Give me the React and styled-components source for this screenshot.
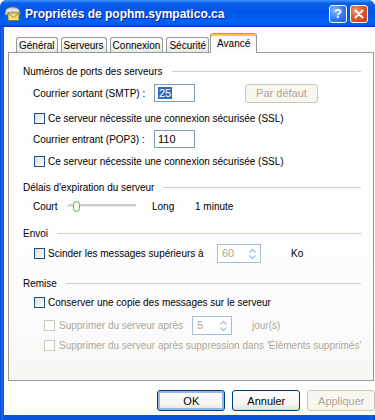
import React from 'react';
import styled, { createGlobalStyle } from 'styled-components';

const Global = createGlobalStyle`
  html, body { margin: 0; padding: 0; background: #ffffff; }
  body { font-family: "Liberation Sans", Arial, sans-serif; font-size: 10px; color: #000; }
  * { box-sizing: border-box; }
`;

const Window = styled.div`
  width: 375px;
  height: 420px;
  display: flex;
  flex-direction: column;
  background: #0a4fe0;
  border-radius: 7px 7px 0 0;
  overflow: hidden;
`;

const TitleBar = styled.div`
  height: 27px;
  flex: none;
  display: flex;
  align-items: center;
  padding: 0 7px 0 4px;
  background: linear-gradient(to bottom, #3d95ff 0%, #0a5ee8 12%, #0055ea 45%, #0062f7 80%, #0058ee 92%, #003dd7 100%);
`;

const TitleText = styled.div`
  flex: 1;
  margin-left: 4px;
  color: #fff;
  font-weight: bold;
  font-size: 12px;
  text-shadow: 1px 1px 0 #0a1f8a;
  white-space: nowrap;
`;

const CaptionButton = styled.div`
  width: 18px;
  height: 18px;
  margin-left: 3px;
  border: 1px solid #fff;
  border-radius: 3px;
  display: flex;
  align-items: center;
  justify-content: center;
  color: #fff;
  font-weight: bold;
  font-size: 13px;
  background: ${p => p.$close
    ? 'radial-gradient(circle at 30% 30%, #f39a7a 0%, #e4582d 45%, #c6390e 100%)'
    : 'radial-gradient(circle at 30% 30%, #8fbaff 0%, #3c84f5 45%, #1d58dc 100%)'};
`;

const Frame = styled.div`
  flex: 1;
  display: flex;
  padding: 0 6px 5px 4px;
  background: linear-gradient(to right, #0b49db 0px, #1d67f0 2px, #0855dd 4px, #0855dd 369px, #1760ea 372px, #0637c6 375px);
`;

const Body = styled.div`
  flex: 1;
  display: flex;
  flex-direction: column;
  background: #fdfdfc;
  padding: 6px 4px 0 4px;
`;

const TabRow = styled.div`
  display: flex;
  align-items: flex-end;
  gap: 3px;
  height: 20px;
  padding-left: 8px;
  margin-bottom: -1px;
  position: relative;
  z-index: 1;
`;

const Tab = styled.div`
  height: ${p => (p.$active ? 20 : 15)}px;
  margin: 0 ${p => (p.$active ? -2 : 0)}px ${p => (p.$active ? 0 : 1)}px;
  padding: 0 ${p => (p.$active ? 6 : 2)}px;
  display: flex;
  align-items: center;
  justify-content: center;
  border: 1px solid #919b9c;
  border-bottom: none;
  border-top-color: ${p => (p.$active ? '#e68b2c' : '#919b9c')};
  border-radius: 3px 3px 0 0;
  background: ${p => (p.$active ? '#fcfcfe' : 'linear-gradient(#ffffff, #f3f3ef 60%, #e8e8e2)')};
  box-shadow: ${p => (p.$active ? 'inset 0 2px 0 #ffc83c' : 'none')};
  white-space: nowrap;
  font-size: 10px;
`;

const Panel = styled.div`
  height: 329px;
  flex: none;
  border: 1px solid #919b9c;
  background: linear-gradient(#ffffff, #fcfcfe 80%, #f6f6f3);
  padding: 11px 12px 0 14px;
  display: flex;
  flex-direction: column;
`;

const Heading = styled.div`
  display: flex;
  align-items: center;
  height: 14px;
  margin-top: ${p => p.$mt || 0}px;
  white-space: nowrap;
  &::after {
    content: '';
    flex: 1;
    height: 1px;
    margin-left: 9px;
    background: #d0d0bf;
  }
`;

const Row = styled.div`
  display: flex;
  align-items: center;
  height: ${p => p.$h}px;
  margin-top: ${p => p.$mt}px;
  padding-left: ${p => p.$indent}px;
  white-space: nowrap;
  color: ${p => (p.$disabled ? '#aca899' : '#000')};
`;

const Label = styled.span`
  width: ${p => p.$w}px;
  flex: none;
`;

const Box = styled.span`
  width: 11px;
  height: 11px;
  flex: none;
  border: 1px solid ${p => (p.$disabled ? '#cac8bb' : '#1c5180')};
  background: ${p => (p.$disabled ? '#ffffff' : 'linear-gradient(135deg, #dcdcd7, #ffffff)')};
  margin-right: ${p => p.$gap}px;
`;

const TextInput = styled.div`
  width: ${p => p.$w}px;
  height: 18px;
  flex: none;
  border: 1px solid #7f9db9;
  background: #fff;
  display: flex;
  align-items: center;
  padding-left: 3px;
  font-size: 11px;
`;

const Selected = styled.span`
  background: #316ac5;
  color: #fff;
  padding: 0 1px;
`;

const Spin = styled.div`
  width: ${p => p.$w}px;
  height: 19px;
  flex: none;
  border: 1px solid #a9bcd6;
  background: #fff;
  display: flex;
  align-items: center;
  padding-left: 4px;
  color: #aca899;
  font-size: 11px;
  position: relative;
`;

const SpinArrows = styled.svg`
  position: absolute;
  right: 3px;
  top: 3px;
`;

const Button = styled.div`
  width: ${p => p.$w}px;
  height: ${p => p.$h}px;
  flex: none;
  margin-left: ${p => p.$ml || 0}px;
  border: 1px solid ${p => (p.$disabled ? '#c9c7ba' : '#003c74')};
  border-radius: 3px;
  display: flex;
  align-items: center;
  justify-content: center;
  color: ${p => (p.$disabled ? '#aca899' : '#000')};
  background: ${p => (p.$disabled ? '#f7f6ef' : 'linear-gradient(#ffffff, #f4f4ef 70%, #e3e0d6)')};
  box-shadow: ${p => (p.$default ? 'inset 0 0 0 2px #98b4e8' : 'none')};
  font-size: 11px;
`;

const ButtonRow = styled.div`
  display: flex;
  justify-content: flex-end;
  gap: 7px;
  margin-top: 9px;
  margin-right: -1px;
`;

const Track = styled.svg`
  flex: none;
  margin-right: 15px;
`;

const Check = ({ disabled, gap = 3, children }) => (
  <>
    <Box $disabled={disabled} $gap={gap} />
    {children}
  </>
);

const Arrows = () => (
  <SpinArrows width="9" height="12" viewBox="0 0 9 12">
    <path d="M1.5 4.5 L4.5 1.5 L7.5 4.5" fill="none" stroke="#a7bee5" strokeWidth="1.3" />
    <path d="M1.5 7.5 L4.5 10.5 L7.5 7.5" fill="none" stroke="#a7bee5" strokeWidth="1.3" />
  </SpinArrows>
);

export default function App() {
  return (
    <>
      <Global />
      <Window>
        <TitleBar>
          <svg width="17" height="17" viewBox="0 0 17 17">
            <path d="M1 8 Q1 2 8.5 2 Q16 2 16 8 L16 10 L1 10 Z" fill="#c9ccd4" stroke="#6b7280" strokeWidth="0.8" />
            <path d="M3 6 Q8.5 3 14 6" fill="none" stroke="#ffffff" strokeWidth="1" />
            <rect x="4" y="8" width="11" height="7.5" fill="#f7e27a" stroke="#8a6d12" strokeWidth="0.8" />
            <path d="M4 8 L9.5 12.5 L15 8" fill="none" stroke="#8a6d12" strokeWidth="0.8" />
          </svg>
          <TitleText>Propriétés de pophm.sympatico.ca</TitleText>
          <CaptionButton>?</CaptionButton>
          <CaptionButton $close>
            <svg width="10" height="10" viewBox="0 0 10 10">
              <path d="M1.5 1.5 L8.5 8.5 M8.5 1.5 L1.5 8.5" stroke="#fff" strokeWidth="2" strokeLinecap="round" />
            </svg>
          </CaptionButton>
        </TitleBar>
        <Frame>
          <Body>
            <TabRow>
              <Tab>Général</Tab>
              <Tab>Serveurs</Tab>
              <Tab>Connexion</Tab>
              <Tab>Sécurité</Tab>
              <Tab $active>Avancé</Tab>
            </TabRow>
            <Panel>
              <Heading>Numéros de ports des serveurs</Heading>
              <Row $h={20} $mt={5} $indent={10}>
                <Label $w={121}>Courrier sortant (SMTP) :</Label>
                <TextInput $w={41}><Selected>25</Selected></TextInput>
                <Button $w={73} $h={19} $ml={50} $disabled>Par défaut</Button>
              </Row>
              <Row $h={14} $mt={8} $indent={11}>
                <Check>Ce serveur nécessite une connexion sécurisée (SSL)</Check>
              </Row>
              <Row $h={18} $mt={5} $indent={10}>
                <Label $w={121}>Courrier entrant (POP3) :</Label>
                <TextInput $w={41}>110</TextInput>
              </Row>
              <Row $h={14} $mt={6} $indent={11}>
                <Check>Ce serveur nécessite une connexion sécurisée (SSL)</Check>
              </Row>

              <Heading $mt={12}>Délais d'expiration du serveur</Heading>
              <Row $h={18} $mt={3} $indent={10}>
                <Label $w={34}>Court</Label>
                <Track width="70" height="14" viewBox="0 0 70 14">
                  <path d="M1 8 Q1 6 3 6 L69 6" fill="none" stroke="#9d9c99" strokeWidth="1" />
                  <path d="M1 8 L69 8" fill="none" stroke="#ffffff" strokeWidth="1" />
                  <line x1="3" y1="7" x2="69" y2="7" stroke="#d6d3c9" strokeWidth="1" />
                  <rect x="6.5" y="2.5" width="6" height="10" rx="3" fill="#f4f4f0" stroke="#5fb15f" strokeWidth="1" />
                </Track>
                <Label $w={43}>Long</Label>
                <span>1 minute</span>
              </Row>

              <Heading $mt={11}>Envoi</Heading>
              <Row $h={20} $mt={3} $indent={11}>
                <Box $gap={3} />
                <Label $w={169}>Scinder les messages supérieurs à</Label>
                <Spin $w={44}>60<Arrows /></Spin>
                <Label $w={30} />
                <span>Ko</span>
              </Row>

              <Heading $mt={13}>Remise</Heading>
              <Row $h={14} $mt={5} $indent={11}>
                <Check>Conserver une copie des messages sur le serveur</Check>
              </Row>
              <Row $h={18} $mt={7} $indent={21} $disabled>
                <Box $disabled $gap={4} />
                <Label $w={133}>Supprimer du serveur après</Label>
                <Spin $w={40}>5<Arrows /></Spin>
                <Label $w={20} />
                <span>jour(s)</span>
              </Row>
              <Row $h={14} $mt={4} $indent={21} $disabled>
                <Check disabled gap={4}>Supprimer du serveur après suppression dans 'Éléments supprimés'</Check>
              </Row>
            </Panel>
            <ButtonRow>
              <Button $w={68} $h={21} $default>OK</Button>
              <Button $w={68} $h={21}>Annuler</Button>
              <Button $w={68} $h={21} $disabled>Appliquer</Button>
            </ButtonRow>
          </Body>
        </Frame>
      </Window>
    </>
  );
}
